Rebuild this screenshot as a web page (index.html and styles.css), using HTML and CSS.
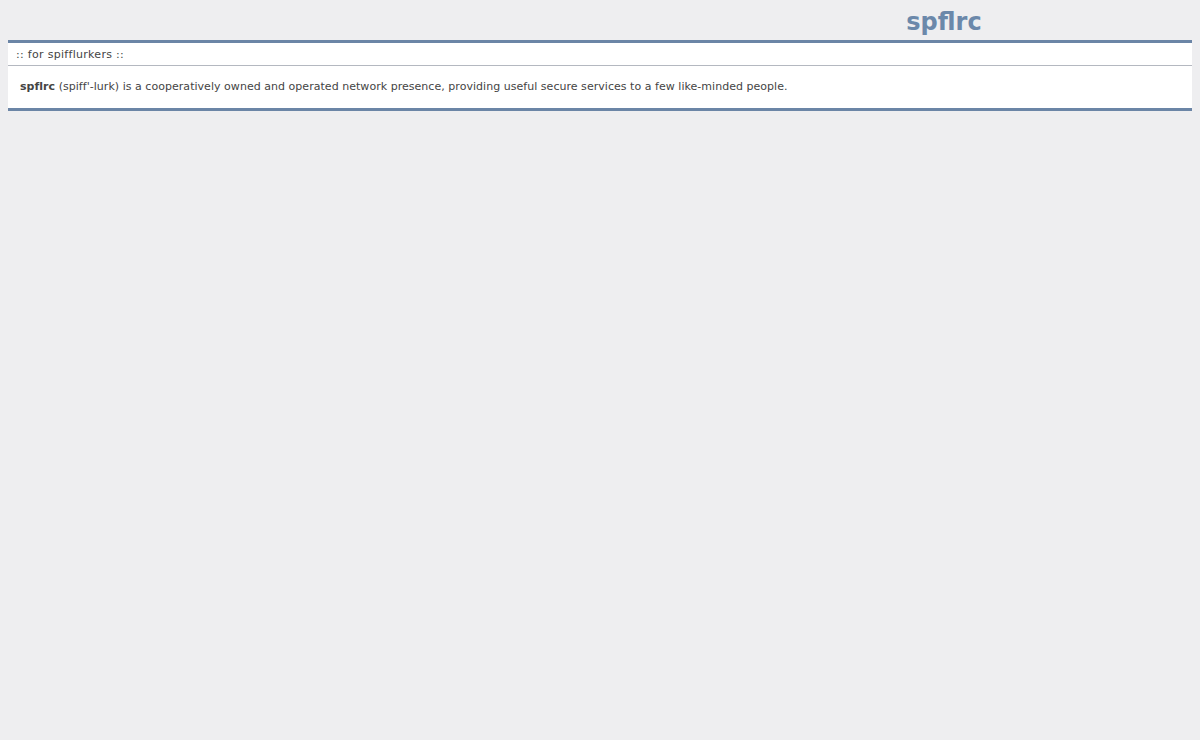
FILE: index.html
```html
<!DOCTYPE html>
<html>
<head>
<meta charset="utf-8">
<title>spflrc</title>
<link rel="stylesheet" href="styles.css">
</head>
<body>
<div class="top">
  <div class="top-left"></div>
  <h1 class="site-title">spflrc</h1>
</div>
<div class="panel">
  <div class="panel-head">:: for spifflurkers ::</div>
  <div class="panel-body"><b>spflrc</b> (spiff'-lurk) is a cooperatively owned and operated network presence, providing useful secure services to a few like-minded people.</div>
</div>
</body>
</html>
```
FILE: styles.css
```css
html, body {
  background: #eeeef0;
}
body {
  margin: 8px;
  font-family: "DejaVu Sans", Verdana, sans-serif;
  font-size: 11px;
  color: #444;
}
.top {
  display: grid;
  grid-template-columns: 1fr 496px;
  height: 32px;
}
.site-title {
  margin: 0;
  text-align: center;
  font-size: 24px;
  line-height: 28px;
  font-weight: bold;
  color: #6b88aa;
}
.panel {
  background: #fff;
  border-top: 3px solid #6b85a6;
  border-bottom: 3px solid #6b85a6;
}
.panel-head {
  padding: 5px 8px 3px 8px;
  line-height: 14px;
  letter-spacing: 0.3px;
  border-bottom: 1px solid #b4b8c0;
}
.panel-body {
  padding: 14px 12px 14px 12px;
  line-height: 14px;
  letter-spacing: 0.035px;
}
.panel-body b {
  color: #444;
}
```
